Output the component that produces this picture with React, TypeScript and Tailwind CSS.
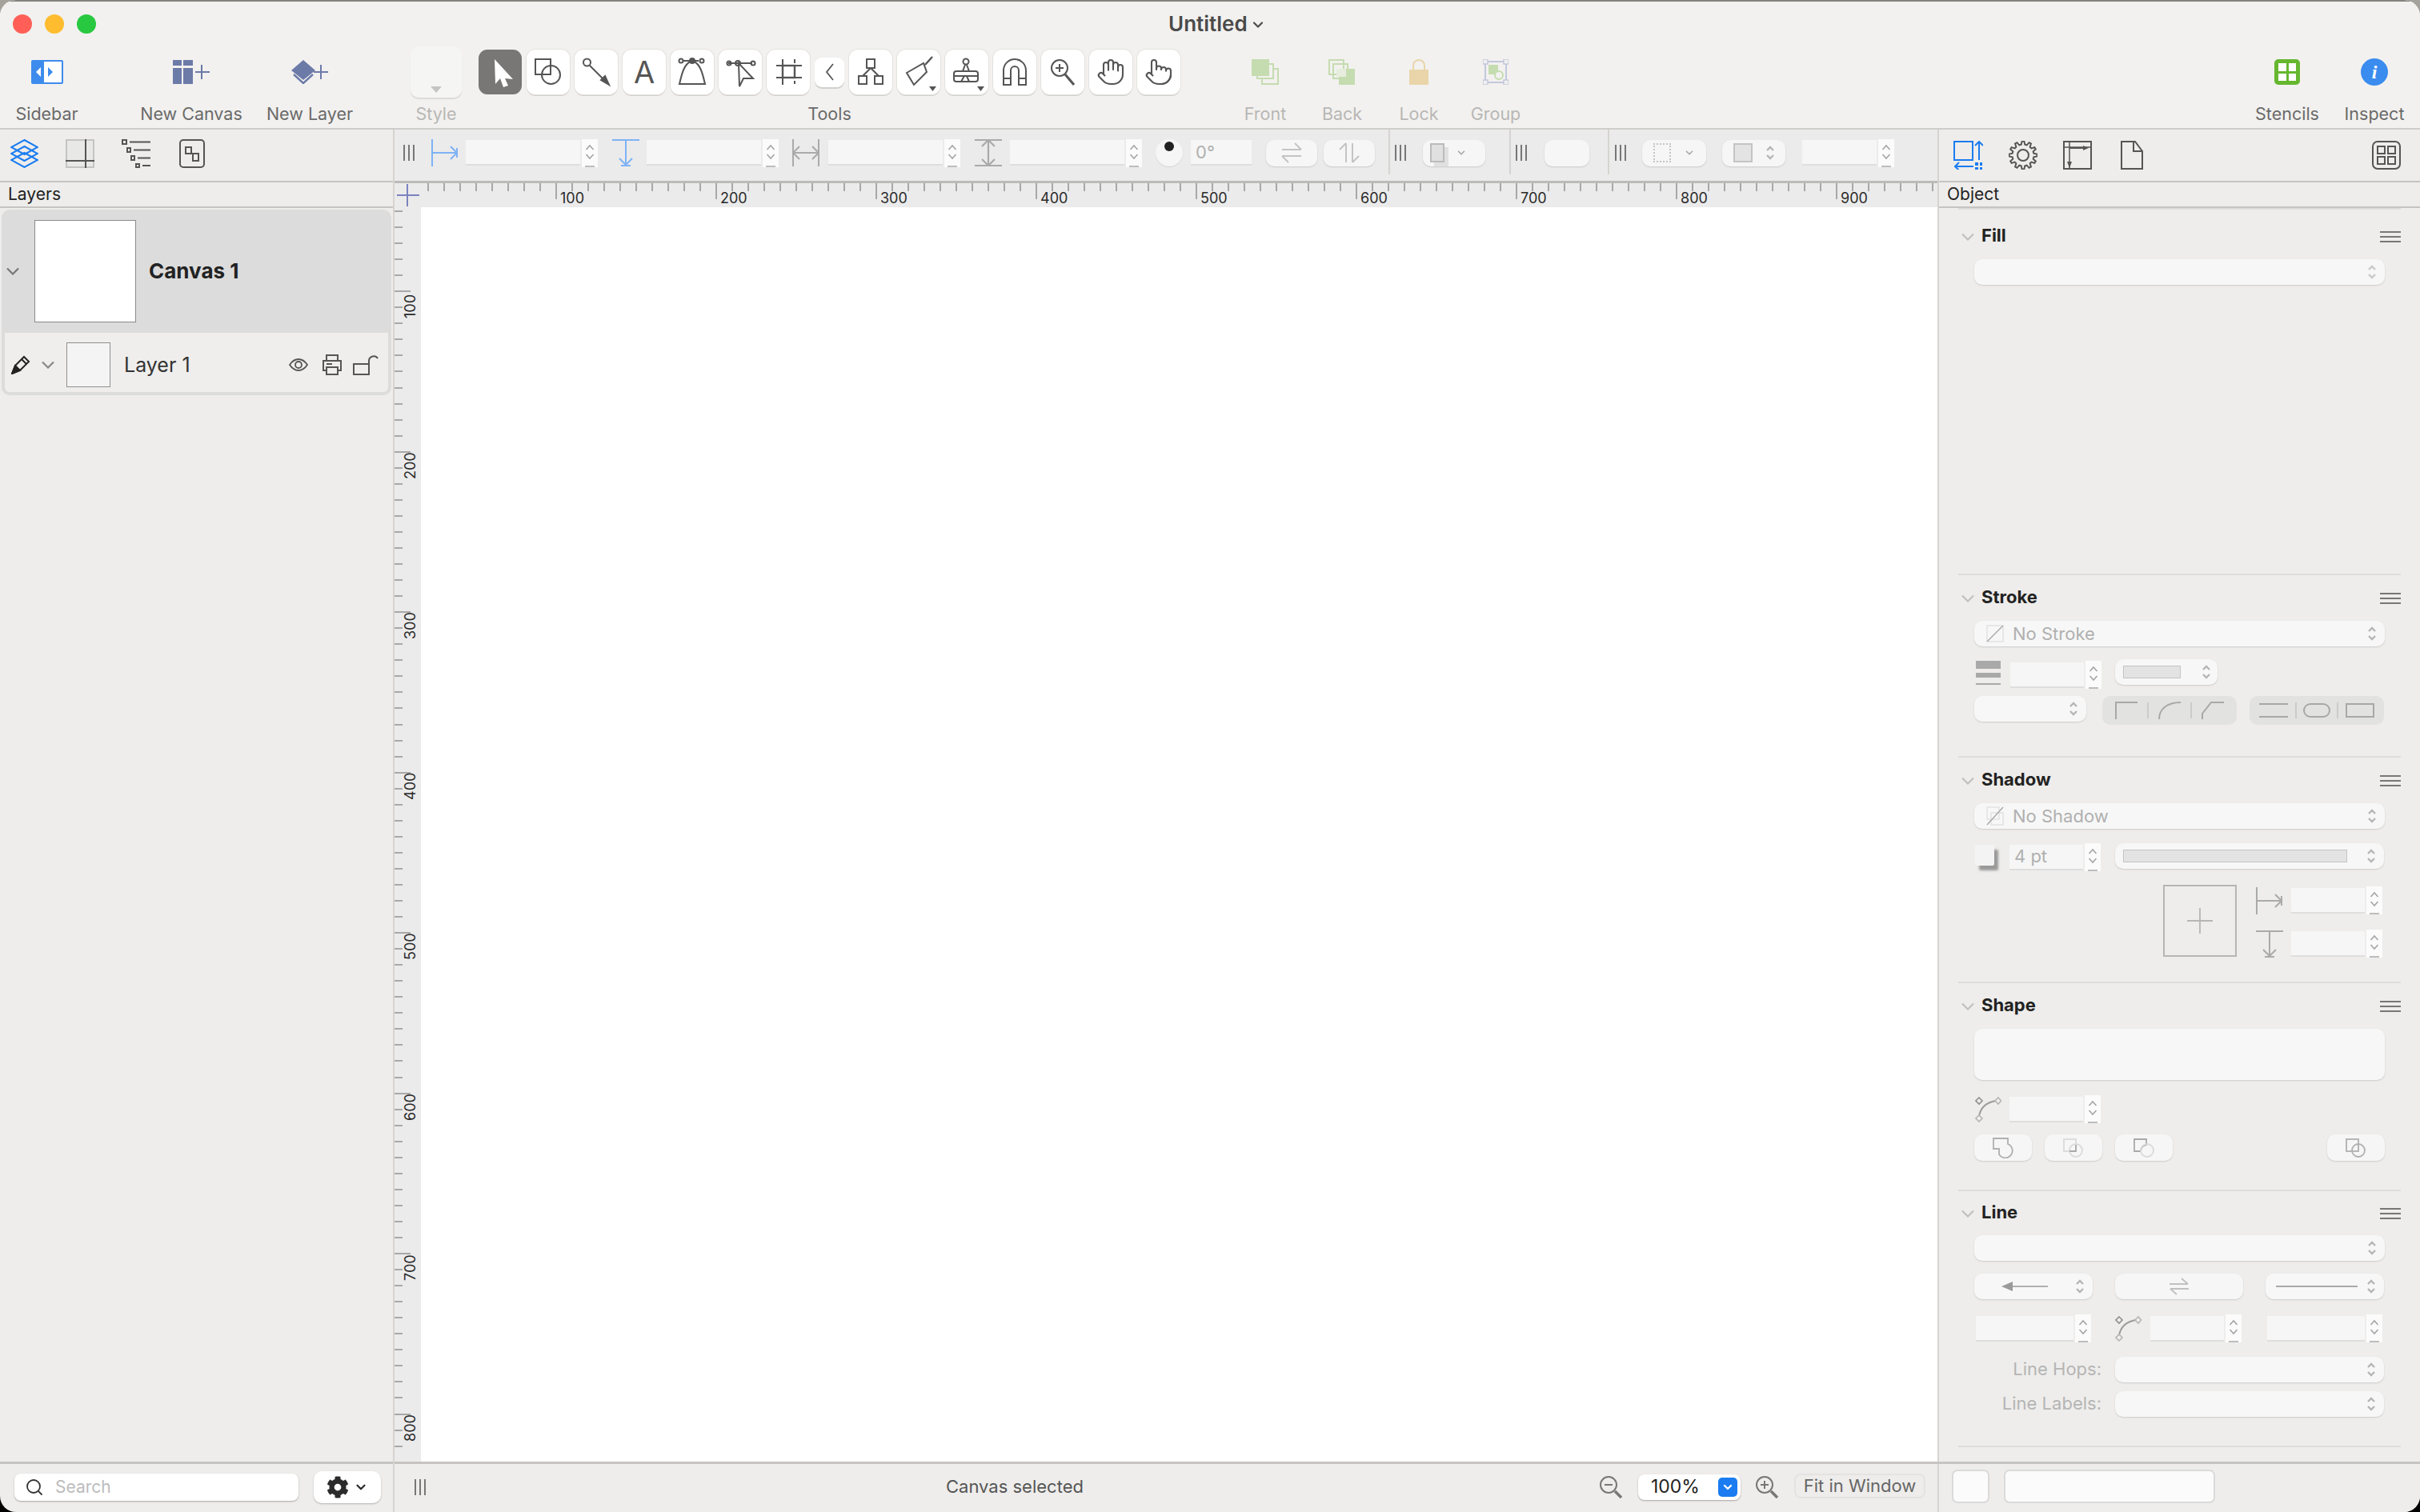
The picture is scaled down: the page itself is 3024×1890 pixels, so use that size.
import { Hand, Pointer, Search, ChevronDown } from 'lucide-react';
import { FaCog } from 'react-icons/fa';
import type { ReactNode } from 'react';

function gearPath(cx: number, cy: number, outer: number, inner: number, n: number) {
  const pts: string[] = [];
  for (let i = 0; i < n; i++) {
    const a = (i / n) * Math.PI * 2;
    const w = (Math.PI / n) * 0.5;
    [[inner, a - w * 1.3], [outer, a - w * 0.6], [outer, a + w * 0.6], [inner, a + w * 1.3]].forEach(([r, t]) => {
      pts.push(`${(cx + r * Math.cos(t)).toFixed(2)} ${(cy + r * Math.sin(t)).toFixed(2)}`);
    });
  }
  return 'M' + pts.join('L') + 'Z';
}

function Grip() {
  return (
    <div className="flex gap-[4px]">
      <div className="w-[2px] h-[20px] bg-[#777]"></div>
      <div className="w-[2px] h-[20px] bg-[#777]"></div>
      <div className="w-[2px] h-[20px] bg-[#777]"></div>
    </div>
  );
}

function UpDown({ className = 'text-[#bdbdbd]' }: { className?: string }) {
  return (
    <svg width="12" height="20" viewBox="0 0 12 20" fill="none" stroke="currentColor" strokeWidth="2.4" className={className}>
      <path d="M2 7l4-4 4 4M2 13l4 4 4-4" />
    </svg>
  );
}

function Stepper() {
  return (
    <div className="ml-[2px] w-[20px] h-[35px] bg-[#fbfbfb] flex flex-col items-center justify-between pt-[6px] shrink-0">
      <svg width="12" height="20" viewBox="0 0 12 20" fill="none" stroke="#a5a5a5" strokeWidth="1.6">
        <path d="M1.5 7l4.5-5 4.5 5M1.5 13l4.5 5 4.5-5" />
      </svg>
      <div className="w-[12px] h-[2px] bg-[#bdbdbd]"></div>
    </div>
  );
}

function NumField({ className, text }: { className: string; text?: string }) {
  return (
    <div className="flex items-center shrink-0">
      <div className={`h-[32px] bg-[#f6f6f6] border-b-2 border-[#dedede] flex items-center pl-[6px] text-[22px] text-[#b0b0b0] ${className}`}>{text}</div>
      <Stepper />
    </div>
  );
}

function Select({ className = '', chevron = 'text-[#b5b5b5]', children }: { className?: string; chevron?: string; children?: ReactNode }) {
  return (
    <div className={`h-[32px] rounded-[10px] bg-[#f7f7f7] shadow-[0_1px_2px_rgba(0,0,0,0.14)] flex items-center pr-[10px] ${className}`}>
      <div className="flex-1 flex items-center min-w-0">{children}</div>
      <UpDown className={chevron} />
    </div>
  );
}

function Section({ className, head, title, children }: { className: string; head?: string; title: string; children?: ReactNode }) {
  return (
    <section className={`mx-[24px] border-t-2 border-[#dfdddb] ${className}`}>
      <div className={`flex items-center ${head ?? 'h-[57px]'}`}>
        <svg width="16" height="10" viewBox="0 0 16 10" fill="none" stroke="#c0c0c0" strokeWidth="2.2" className="ml-[4px]">
          <path d="M1 1.5l7 7 7-7" />
        </svg>
        <span className="ml-[9px] pb-[3px] text-[22px] font-bold text-[#222]">{title}</span>
        <div className="ml-auto flex flex-col gap-[4px]">
          <div className="w-[26px] h-[2px] bg-[#777]"></div>
          <div className="w-[26px] h-[2px] bg-[#777]"></div>
          <div className="w-[26px] h-[2px] bg-[#777]"></div>
        </div>
      </div>
      <div className="pl-[20px] pr-[20px]">{children}</div>
    </section>
  );
}

function ToolBtn({ active, children }: { active?: boolean; children: ReactNode }) {
  return (
    <div className={`w-[54px] h-[56px] rounded-[11px] flex items-center justify-center shrink-0 text-[#555] ${active ? 'bg-[#787776]' : 'bg-white shadow-[0_0_0_1px_#e4e2df,0_2px_0_#d2d0cd]'}`}>
      {children}
    </div>
  );
}

function Tool({ children }: { children: ReactNode }) {
  return (
    <svg width="54" height="56" viewBox="0 0 54 56" fill="none" stroke="currentColor" strokeWidth="2">
      {children}
    </svg>
  );
}

function ToolbarItem({ className, label, dim, children }: { className: string; label: string; dim?: boolean; children?: ReactNode }) {
  return (
    <div className={`flex flex-col items-center shrink-0 ${className}`}>
      <div className="h-[64px] flex items-center justify-center">{children}</div>
      <div className={`mt-[5px] h-[30px] leading-[30px] text-[21.5px] whitespace-nowrap ${dim ? 'text-[#b8b7b5]' : 'text-[#6a6a6a]'}`}>{label}</div>
    </div>
  );
}

function FlatBtn({ className, children }: { className: string; children?: ReactNode }) {
  return <div className={`h-[33px] rounded-[10px] bg-[#f6f6f6] shadow-[0_1px_2px_rgba(0,0,0,0.14)] flex items-center justify-center shrink-0 ${className}`}>{children}</div>;
}

function CornerIcon() {
  return (
    <svg width="33" height="32" viewBox="0 0 33 32" fill="none" className="shrink-0">
      <path d="M5 25C6 15 13 7 26 5" stroke="#9b9b9b" strokeWidth="2" />
      <path d="M5 1l4 4-4 4-4-4z" fill="#efefef" stroke="#8f8f8f" strokeWidth="1.6" />
      <path d="M29 1l3.500 4-3.500 4-4-4zM5 23l4 4-4 4-4-4z" fill="#efefef" stroke="#b5b5b5" strokeWidth="1.6" />
    </svg>
  );
}

const hTicks = Array.from({ length: 95 }, (_, i) => i);
const vTicks = Array.from({ length: 79 }, (_, i) => i);

function HRuler() {
  return (
    <div className="h-[33px] bg-[#ebebeb] border-t-[3px] border-[#bdbbb8] flex pl-[8px] overflow-hidden">
      {hTicks.map((i) => {
        const long = i >= 8 && (i - 8) % 10 === 0;
        return (
          <div key={i} className={`w-[20px] shrink-0 border-l-2 border-[#a8a8a8] ${long ? 'h-[20px]' : 'h-[10px]'}`}>
            {long && <div className="pl-[4px] mt-[8px] text-[18px] leading-[22px] text-[#2a2a2a] whitespace-nowrap">{((i - 8) / 10 + 1) * 100}</div>}
          </div>
        );
      })}
    </div>
  );
}

function VRuler() {
  return (
    <div className="flex-1 w-[33px] bg-[#ebebeb] pt-[4px] overflow-hidden">
      {vTicks.map((i) => {
        const long = i >= 5 && (i - 5) % 10 === 0;
        return (
          <div key={i} className="h-[20.06px] flex items-start">
            <div className={`h-[2px] bg-[#a8a8a8] ${long ? 'w-[20px]' : 'w-[10px]'}`}></div>
            {long && <div className="-ml-[10px] mt-[3px] h-[32px] w-[20px] shrink-0 [writing-mode:vertical-rl] rotate-180 text-[18px] leading-[20px] text-[#2a2a2a] whitespace-nowrap">{((i - 5) / 10 + 1) * 100}</div>}
          </div>
        );
      })}
    </div>
  );
}

function OffsetX({ color = '#aaa' }: { color?: string }) {
  return (
    <svg width="34" height="34" viewBox="0 0 34 34" fill="none" stroke={color} strokeWidth="2" className="shrink-0">
      <path d="M1 0v34M1 17h31M24 9l8 8-8 8M32 11v12" />
    </svg>
  );
}

function OffsetY({ color = '#aaa' }: { color?: string }) {
  return (
    <svg width="34" height="34" viewBox="0 0 34 34" fill="none" stroke={color} strokeWidth="2" className="shrink-0">
      <path d="M0 1h34M17 1v31M9 24l8 8 8-8M11 33h12" />
    </svg>
  );
}

export default function App() {
  return (
    <div className="w-[3024px] h-[1890px] bg-[linear-gradient(#a5a29b_50%,#000_50%)] [font-family:Inter,sans-serif]">
      <div className="w-full h-full rounded-[20px] overflow-hidden flex flex-col bg-[#eeedeb]">
        {/* toolbar */}
        <header className="h-[162px] shrink-0 bg-[#f2f1ef] border-t-2 border-b-2 border-t-[#85837e] border-b-[#cfcdca]">
          <div className="h-[56px] flex items-start">
            <div className="flex gap-[16px] pl-[16px] pt-[16px]">
              <div className="w-[24px] h-[24px] rounded-full bg-[#ff5f57]"></div>
              <div className="w-[24px] h-[24px] rounded-full bg-[#febc2e]"></div>
              <div className="w-[24px] h-[24px] rounded-full bg-[#28c840]"></div>
            </div>
            <div className="ml-[1340px] flex items-center h-[54px]">
              <span className="text-[26px] font-semibold text-[#4a4a4a]">Untitled</span>
              <ChevronDown size={20} strokeWidth={2.6} className="ml-[3px] mt-[4px] text-[#4a4a4a]" />
            </div>
          </div>
          <div className="flex">
            <ToolbarItem className="w-[117px]" label="Sidebar">
              <svg width="40" height="30" viewBox="0 0 40 30">
                <rect width="40" height="30" rx="2" fill="#3d8bed" />
                <rect x="16" y="2" width="22" height="26" fill="#fff" />
                <path d="M21 9v12l6-6z" fill="#3d8bed" />
                <path d="M12 9v12l-6-6z" fill="#fff" />
              </svg>
            </ToolbarItem>
            <ToolbarItem className="w-[140px] ml-[52px]" label="New Canvas">
              <svg width="46" height="30" viewBox="0 0 46 30" fill="#6c7aa8">
                <rect x="0" y="0" width="11" height="7" />
                <rect x="13" y="0" width="12" height="7" />
                <rect x="0" y="10" width="11" height="20" />
                <rect x="13" y="10" width="12" height="20" />
                <path d="M36 6v18M28 15h18" stroke="#6c7aa8" strokeWidth="2" />
              </svg>
            </ToolbarItem>
            <ToolbarItem className="w-[110px] ml-[23px]" label="New Layer">
              <svg width="47" height="30" viewBox="0 0 47 30">
                <path d="M15 0l15 13-15 12L0 13z" fill="#6c7aa8" />
                <path d="M3 18l12 11 12-11" fill="none" stroke="#6c7aa8" strokeWidth="2.4" />
                <path d="M37 6v18M28 15h18" stroke="#6c7aa8" strokeWidth="2" />
              </svg>
            </ToolbarItem>
            <ToolbarItem className="w-[64px] ml-[71px]" label="Style" dim>
              <div className="w-[64px] h-[64px] rounded-[10px] bg-[#f5f5f4] shadow-[0_2px_1px_#dcdad8] flex items-end justify-center pb-[6px]">
                <div className="w-0 h-0 border-l-[7px] border-r-[7px] border-t-[8px] border-l-transparent border-r-transparent border-t-[#c4c4c4]"></div>
              </div>
            </ToolbarItem>
            <div className="ml-[20px] w-[879px] flex flex-col items-center shrink-0">
              <div className="h-[64px] flex items-center gap-[6px]">
                <ToolBtn active>
                  <Tool><path d="M20 12L43 37L33 36L37 45L31 47L27 36L21 43Z" fill="#fff" stroke="none" /></Tool>
                </ToolBtn>
                <ToolBtn>
                  <Tool><rect x="11" y="12" width="19" height="19" /><circle cx="30.5" cy="31.5" r="11.5" /></Tool>
                </ToolBtn>
                <ToolBtn>
                  <Tool><circle cx="15.5" cy="16" r="4.5" /><path d="M19 20L38 39" /><path d="M43 44L33 38L38 33Z" fill="currentColor" /></Tool>
                </ToolBtn>
                <ToolBtn>
                  <span className="text-[38px] leading-none text-[#555]">A</span>
                </ToolBtn>
                <ToolBtn>
                  <Tool><path d="M25 15C17 18 14 30 11 43H43C40 30 37 18 29 15" /><path d="M15 14H35" /><circle cx="13" cy="14" r="2.5" /><circle cx="27" cy="14" r="3" fill="currentColor" /><circle cx="39" cy="14" r="2.5" /></Tool>
                </ToolBtn>
                <ToolBtn>
                  <Tool><path d="M25 17L26 46L31 36L43 36Z" /><path d="M12 17H42" /><circle cx="13" cy="17" r="2.5" /><circle cx="24" cy="17" r="3" /><circle cx="43" cy="17" r="2.5" /></Tool>
                </ToolBtn>
                <ToolBtn>
                  <Tool><rect x="20" y="20" width="15" height="15" strokeWidth="2.4" /><path d="M20 12v8M20 35v9M12 20h8M35 20h9M12 35h8M35 35h9M35 12v5M35 39v4" /></Tool>
                </ToolBtn>
                <div className="w-[37px] h-[37px] rounded-[9px] bg-white shadow-[0_2px_0_#d2d0cd] flex items-center justify-center shrink-0">
                  <svg width="12" height="24" viewBox="0 0 12 24" fill="none" stroke="#555" strokeWidth="1.8"><path d="M10 2L2 12l8 10" /></svg>
                </div>
                <ToolBtn>
                  <Tool><rect x="22" y="12" width="10" height="11" /><rect x="12" y="33" width="10" height="10" /><rect x="32" y="33" width="10" height="10" /><path d="M27 23L17 33M27 23L37 33" /></Tool>
                </ToolBtn>
                <ToolBtn>
                  <Tool><path d="M12 29L33 17L37 28L21 44Z" /><path d="M35 19L44 9" strokeWidth="2.4" /><path d="M40 46h9l-4.500 6z" fill="currentColor" stroke="none" /></Tool>
                </ToolBtn>
                <ToolBtn>
                  <Tool><circle cx="26" cy="15" r="3.500" /><path d="M25 19L22 27H30L27 19" /><rect x="11" y="27" width="30" height="13" rx="3" /><path d="M11 33H41M20 40L24 33M30 40L27 33" /><path d="M40 46h9l-4.500 6z" fill="currentColor" stroke="none" /></Tool>
                </ToolBtn>
                <ToolBtn>
                  <Tool><path d="M13 44V26a14 14 0 0 1 28 0V44H32V26a5 5 0 0 0-10 0V44Z" /><path d="M13 36H22M32 36H41" /></Tool>
                </ToolBtn>
                <ToolBtn>
                  <Tool><circle cx="23" cy="23" r="10" /><path d="M23 18v10M18 23h10" /><path d="M30 31L41 44" strokeWidth="3" /></Tool>
                </ToolBtn>
                <ToolBtn><Hand size={36} strokeWidth={1.4} /></ToolBtn>
                <ToolBtn><Pointer size={36} strokeWidth={1.4} /></ToolBtn>
              </div>
              <div className="mt-[5px] h-[30px] leading-[30px] text-[21.5px] text-[#6a6a6a]">Tools</div>
            </div>
            <ToolbarItem className="w-[96px] ml-[57px]" label="Front" dim>
              <svg width="34" height="32" viewBox="0 0 34 32" fill="none" stroke="#c5dcb0" strokeWidth="2"><rect x="1" y="0" width="20" height="20" fill="#c5dcb0" /><path d="M21 6h6v18H7v-4M27 12h6v19H13v-7" /></svg>
            </ToolbarItem>
            <ToolbarItem className="w-[96px]" label="Back" dim>
              <svg width="34" height="32" viewBox="0 0 34 32" fill="none" stroke="#c5dcb0" strokeWidth="2"><rect x="1" y="1" width="18" height="18" /><rect x="6" y="6" width="18" height="18" /><rect x="13" y="12" width="20" height="20" fill="#c5dcb0" stroke="none" /><rect x="10" y="12" width="12" height="10" fill="#e6eddd" stroke="none" /></svg>
            </ToolbarItem>
            <ToolbarItem className="w-[96px]" label="Lock" dim>
              <svg width="24" height="32" viewBox="0 0 24 32" fill="none"><path d="M5 14V8a7 7 0 0 1 14 0v6" stroke="#e9d5a9" strokeWidth="2" /><rect y="13" width="24" height="19" fill="#e9d5a9" /></svg>
            </ToolbarItem>
            <ToolbarItem className="w-[96px]" label="Group" dim>
              <svg width="32" height="32" viewBox="0 0 32 32" fill="none"><rect x="3" y="3" width="26" height="26" stroke="#c3c8dc" strokeWidth="2" /><rect x="0" y="0" width="6" height="6" fill="#f2f1ef" stroke="#c3c8dc" strokeWidth="1.500" /><rect x="26" y="0" width="6" height="6" fill="#f2f1ef" stroke="#c3c8dc" strokeWidth="1.500" /><rect x="0" y="26" width="6" height="6" fill="#f2f1ef" stroke="#c3c8dc" strokeWidth="1.500" /><rect x="26" y="26" width="6" height="6" fill="#f2f1ef" stroke="#c3c8dc" strokeWidth="1.500" /><rect x="7" y="7" width="12" height="12" fill="#c5dcb0" /><circle cx="20" cy="20" r="5" fill="#f2f1ef" stroke="#c5dcb0" strokeWidth="2" /></svg>
            </ToolbarItem>
            <ToolbarItem className="w-[90px] ml-[896px]" label="Stencils">
              <div className="w-[32px] h-[32px] rounded-[5px] bg-[#66b72f] grid grid-cols-2 gap-[3px] p-[5px]">
                <div className="bg-white"></div><div className="bg-white"></div><div className="bg-white"></div><div className="bg-white"></div>
              </div>
            </ToolbarItem>
            <ToolbarItem className="w-[90px] ml-[19px]" label="Inspect">
              <div className="w-[34px] h-[34px] rounded-full bg-[#3a8cee] flex items-center justify-center text-white font-bold italic text-[24px] [font-family:'Liberation_Serif',serif]">i</div>
            </ToolbarItem>
          </div>
        </header>

        <div className="flex-1 flex min-h-0">
          {/* left sidebar */}
          <div className="w-[493px] shrink-0 flex flex-col border-r-2 border-[#d6d4d1]">
            <div className="h-[64px] flex items-center pb-[4px] pl-[13px] shrink-0">
              <svg width="35" height="36" viewBox="0 0 35 36" fill="none" stroke="#1a7cf0" strokeWidth="2">
                <path d="M17.5 1L34 10 17.500 19 1 10zM17.500 9L34 18 17.500 27 1 18zM17.500 17L34 26 17.500 35 1 26z" />
              </svg>
              <svg width="36" height="36" viewBox="0 0 36 36" fill="none" stroke="#555" strokeWidth="2" className="ml-[34px]">
                <rect x="1" y="1" width="34" height="34" stroke="#c4c4c4" strokeWidth="2" fill="#e8e8e6" />
                <path d="M25 0V36M0 27H36" strokeWidth="2" />
              </svg>
              <svg width="36" height="36" viewBox="0 0 36 36" fill="none" stroke="#555" strokeWidth="2" className="ml-[34px]">
                <rect x="1" y="1" width="5" height="5" /><path d="M10 3.500H36" />
                <rect x="7" y="11" width="4" height="5" /><path d="M15 13.500H36" />
                <rect x="12" y="21" width="4" height="5" /><path d="M20 23.500H36" />
                <rect x="18" y="31" width="4" height="4" /><path d="M26 33H36" />
              </svg>
              <svg width="32" height="36" viewBox="0 0 32 36" fill="none" stroke="#555" strokeWidth="2" className="ml-[36px]">
                <rect x="1" y="1" width="30" height="34" rx="4" /><rect x="8" y="10" width="7" height="8" /><rect x="17" y="18" width="7" height="9" />
              </svg>
            </div>
            <div className="h-[34px] shrink-0 border-t-2 border-b-2 border-[#c6c4c1] flex items-center pl-[10px] text-[21px] text-[#222]">Layers</div>
            <div className="mt-[2px] ml-[2px] mr-[2px] rounded-[10px] bg-[#dcdcdc] pb-[4px]">
              <div className="h-[154px] flex items-center">
                <svg width="16" height="10" viewBox="0 0 16 10" fill="none" stroke="#777" strokeWidth="2.200" className="ml-[6px]"><path d="M1 1.500l7 7 7-7" /></svg>
                <div className="ml-[19px] w-[127px] h-[128px] bg-white border border-[#8a8a8a]"></div>
                <span className="ml-[16px] pb-[1px] text-[26px] font-bold text-[#222]">Canvas 1</span>
              </div>
              <div className="mx-[4px] h-[74px] pt-[6px] bg-[#efeeec] rounded-b-[6px] flex items-center text-[#555]">
                <svg width="24" height="24" viewBox="0 0 24 24" fill="none" stroke="#222" strokeWidth="2" className="ml-[8px]"><path d="M1 23l4-10L16 2l6 6L11 19zM13 5l6 6" /><path d="M1 23l4-10 6 6z" fill="#222" /></svg>
                <svg width="16" height="10" viewBox="0 0 16 10" fill="none" stroke="#888" strokeWidth="2.200" className="ml-[14px]"><path d="M1 1.500l7 7 7-7" /></svg>
                <div className="ml-[15px] w-[55px] h-[56px] bg-[#f4f4f4] border border-[#8f8f8f]"></div>
                <span className="ml-[17px] pt-[2px] text-[25px] text-[#333]">Layer 1</span>
                <svg width="24" height="16" viewBox="0 0 24 16" fill="none" stroke="#555" strokeWidth="1.800" className="ml-[123px]"><path d="M1 8C5 2 9 1 12 1s7 1 11 7c-4 6-8 7-11 7S5 14 1 8z" /><circle cx="12" cy="8" r="4" /></svg>
                <svg width="24" height="26" viewBox="0 0 24 26" fill="none" stroke="#555" strokeWidth="2" className="ml-[18px]"><path d="M5 8V1h14v7M5 20H1V8h22v12h-4" /><rect x="5" y="16" width="14" height="9" /><path d="M5 12h7" /></svg>
                <svg width="32" height="26" viewBox="0 0 32 26" fill="none" stroke="#555" strokeWidth="2" className="ml-[14px]"><rect x="1" y="12" width="19" height="13" /><path d="M20 12V8a6 6 0 0 1 11-3" /></svg>
              </div>
            </div>
            <div className="mt-auto h-[63px] shrink-0 border-t-[3px] border-[#c6c4c1] flex items-center pl-[18px] pb-[3px]">
              <div className="w-[355px] h-[34px] rounded-[8px] bg-white shadow-[0_1px_2px_rgba(0,0,0,0.3)] flex items-center pl-[13px]">
                <Search size={24} strokeWidth={1.800} className="text-[#333] shrink-0" />
                <span className="ml-[14px] text-[21px] text-[#bcbcbc]">Search</span>
              </div>
              <div className="ml-[19px] w-[84px] h-[40px] rounded-[10px] bg-white shadow-[0_1px_2px_rgba(0,0,0,0.25)] flex items-center justify-center gap-[6px]">
                <FaCog size={28} className="text-[#2b2b2b]" />
                <ChevronDown size={18} strokeWidth={3} className="text-[#2b2b2b]" />
              </div>
            </div>
          </div>

          {/* canvas */}
          <div className="w-[1928px] shrink-0 flex flex-col min-w-0">
            <div className="h-[64px] shrink-0 bg-[#ebebeb] flex items-center pb-[6px]">
              <div className="ml-[11px]"><Grip /></div>
              <div className="ml-[21px]"><OffsetX color="#7fb2f5" /></div>
              <div className="ml-[9px]"><NumField className="w-[143px]" /></div>
              <div className="ml-[18px]"><OffsetY color="#7fb2f5" /></div>
              <div className="ml-[9px]"><NumField className="w-[143px]" /></div>
              <svg width="34" height="34" viewBox="0 0 34 34" fill="none" stroke="#aaa" strokeWidth="2" className="ml-[17px] shrink-0"><path d="M1 0v34M33 0v34M1 17h32M9 9l-8 8 8 8M25 9l8 8-8 8" /></svg>
              <div className="ml-[11px]"><NumField className="w-[143px]" /></div>
              <svg width="34" height="34" viewBox="0 0 34 34" fill="none" stroke="#aaa" strokeWidth="2" className="ml-[18px] shrink-0"><path d="M0 1h34M0 33h34M17 1v32M9 9l8-8 8 8M9 25l8 8 8-8" strokeWidth="2.200" /></svg>
              <div className="ml-[10px]"><NumField className="w-[143px]" /></div>
              <div className="ml-[17px] w-[34px] h-[34px] rounded-full bg-[#f6f6f6] shadow-[0_1px_1px_rgba(0,0,0,0.1)] flex justify-center pt-[3px] shrink-0"><div className="w-[12px] h-[12px] rounded-full bg-[#222]"></div></div>
              <div className="ml-[10px] w-[76px] h-[32px] bg-[#f6f6f6] border-b-2 border-[#dedede] flex items-center pl-[6px] text-[22px] text-[#b0b0b0] shrink-0">0°</div>
              <FlatBtn className="ml-[18px] w-[64px]">
                <svg width="28" height="28" viewBox="0 0 28 28" fill="none" stroke="#c4c4c4" strokeWidth="2"><path d="M2 10H26M18 2l8 8M26 18H2M10 26l-8-8" /></svg>
              </FlatBtn>
              <FlatBtn className="ml-[8px] w-[64px]">
                <svg width="28" height="28" viewBox="0 0 28 28" fill="none" stroke="#c4c4c4" strokeWidth="2"><path d="M10 26V2M2 10l8-8M18 2v24M26 18l-8 8" /></svg>
              </FlatBtn>
              <div className="ml-[17px] -mt-[2px] w-[2px] h-[56px] bg-[#d6d4d1]"></div>
              <div className="ml-[6px]"><Grip /></div>
              <FlatBtn className="ml-[21px] w-[78px]">
                <div className="w-[18px] h-[24px] bg-[#e0e0e0] border-2 border-[#bbb] -ml-[14px] shadow-[5px_5px_0_#e0e0e0]"></div>
                <ChevronDown size={14} strokeWidth={3} className="ml-[14px] text-[#aaa]" />
              </FlatBtn>
              <div className="ml-[30px] -mt-[2px] w-[2px] h-[56px] bg-[#d6d4d1]"></div>
              <div className="ml-[6px]"><Grip /></div>
              <FlatBtn className="ml-[22px] w-[56px]" />
              <div className="ml-[23px] -mt-[2px] w-[2px] h-[56px] bg-[#d6d4d1]"></div>
              <div className="ml-[7px]"><Grip /></div>
              <FlatBtn className="ml-[20px] w-[80px]">
                <div className="w-[22px] h-[24px] border-2 border-dotted border-[#c4c4c4]"></div>
                <ChevronDown size={14} strokeWidth={3} className="ml-[16px] text-[#aaa]" />
              </FlatBtn>
              <FlatBtn className="ml-[20px] w-[79px]">
                <div className="w-[24px] h-[24px] bg-[#e3e3e3] border-2 border-[#c4c4c4]"></div>
                <UpDown className="ml-[16px] text-[#b5b5b5]" />
              </FlatBtn>
              <div className="ml-[21px]"><NumField className="w-[93px]" /></div>
            </div>
            <div className="flex-1 flex min-h-0">
              <div className="w-[33px] shrink-0 flex flex-col">
                <div className="h-[33px] bg-[#ebebeb] border-t-[3px] border-[#bdbbb8] shrink-0">
                  <svg width="33" height="30" viewBox="0 0 33 30" fill="none" stroke="#7c82bf" strokeWidth="2"><path d="M16 1V29M3 15H31" /></svg>
                </div>
                <VRuler />
              </div>
              <div className="flex-1 flex flex-col min-w-0">
                <HRuler />
                <div className="flex-1 bg-white"></div>
              </div>
            </div>
            <div className="h-[63px] shrink-0 border-t-[3px] border-[#c6c4c1] flex items-center pb-[3px] text-[#555]">
              <div className="ml-[25px]"><Grip /></div>
              <span className="ml-[650px] text-[22px] w-[172px] whitespace-nowrap text-[#555]">Canvas selected</span>
              <svg width="29" height="28" viewBox="0 0 29 28" fill="none" stroke="#777" strokeWidth="2" className="ml-[645px]"><circle cx="11" cy="11" r="10" /><path d="M6 11h10" /><path d="M19 19l8 8" strokeWidth="3.500" /></svg>
              <div className="ml-[19px] w-[128px] h-[32px] rounded-[8px] bg-white shadow-[0_1px_2px_rgba(0,0,0,0.3)] flex items-center pl-[16px] pr-[4px] shrink-0">
                <span className="text-[23px] text-[#222]">100%</span>
                <div className="ml-auto w-[24px] h-[24px] rounded-[5px] bg-[#1a7cf0] flex items-center justify-center"><ChevronDown size={16} strokeWidth={3.500} className="text-white" /></div>
              </div>
              <svg width="29" height="28" viewBox="0 0 29 28" fill="none" stroke="#777" strokeWidth="2" className="ml-[19px]"><circle cx="11" cy="11" r="10" /><path d="M6 11h10M11 6v10" /><path d="M19 19l8 8" strokeWidth="3.500" /></svg>
              <div className="ml-[19px] w-[164px] h-[31px] -mt-[2px] rounded-[8px] border-2 border-[#e4e3e1] flex items-center justify-center text-[22px] text-[#666] whitespace-nowrap shrink-0">Fit in Window</div>
            </div>
          </div>

          {/* inspector */}
          <div className="flex-1 flex flex-col border-l-2 border-[#d6d4d1] min-w-0 bg-[#eeedeb]">
            <div className="h-[64px] shrink-0 flex items-center pl-[18px]">
              <svg width="37" height="36" viewBox="0 0 37 36" fill="none" stroke="#1a7cf0" strokeWidth="2"><rect x="1" y="1" width="23" height="23" /><path d="M32 24V1M27 6l5-5 5 5M25 32H2M7 27l-5 5 5 5" /><path d="M27 27h4v4h-4zM33 27h3v4h-3zM27 33h4v3h-4zM33 33h3v3h-3z" fill="#1a7cf0" stroke="none" /></svg>
              <svg width="36" height="36" viewBox="0 0 36 36" fill="none" stroke="#555" strokeWidth="2" className="ml-[32px]"><path d={gearPath(18, 18, 17.500, 13.500, 12)} /><circle cx="18" cy="18" r="7" /></svg>
              <svg width="36" height="36" viewBox="0 0 36 36" fill="none" stroke="#555" strokeWidth="2" className="ml-[32px]"><rect x="1" y="1" width="34" height="34" /><path d="M1 8H35M8 1V35" strokeWidth="1.500" /><path d="M8 9H26" /><path d="M32 9l-7-3v6zM8 34l-3-8h6z" fill="#555" stroke="none" /></svg>
              <svg width="28" height="36" viewBox="0 0 28 36" fill="none" stroke="#555" strokeWidth="2" className="ml-[36px]"><path d="M1 1H18L27 13V35H1ZM16 2V13H26" /></svg>
              <svg width="36" height="36" viewBox="0 0 36 36" fill="none" stroke="#555" strokeWidth="2" className="ml-auto mr-[24px]"><rect x="1" y="1" width="34" height="34" rx="6" /><rect x="7" y="7" width="9" height="9" /><rect x="20" y="7" width="9" height="9" /><rect x="7" y="20" width="9" height="9" /><rect x="20" y="20" width="9" height="9" /></svg>
            </div>
            <div className="h-[34px] shrink-0 border-t-2 border-b-2 border-[#c6c4c1] flex items-center pl-[10px] text-[21px] text-[#222]">Object</div>

            <Section className="h-[457px] border-t-0 pt-[5px]" title="Fill">
              <Select chevron="text-[#c8c8c8]" />
            </Section>
            <Section className="h-[228px]" title="Stroke">
              <Select>
                <svg width="22" height="22" viewBox="0 0 22 22" fill="none" className="ml-[15px]"><rect x="1" y="1" width="20" height="20" stroke="#e2e2e2" strokeWidth="1.500" /><path d="M1 21L21 1" stroke="#aaa" strokeWidth="1.500" /></svg>
                <span className="ml-[11px] text-[22px] text-[#b0b0b0]">No Stroke</span>
              </Select>
              <div className="mt-[16px] flex items-start h-[37px]">
                <svg width="33" height="32" viewBox="0 0 33 32" className="mt-[2px] ml-[1px] shrink-0" fill="#a9a9a9"><rect x="1" y="0" width="31" height="10" /><rect x="1" y="15" width="31" height="6" /><rect x="1" y="28" width="31" height="2" /></svg>
                <div className="ml-[11px] mt-[2px]"><NumField className="w-[92px]" /></div>
                <Select className="ml-[17px] w-[128px] !pr-[8px]">
                  <div className="ml-[10px] w-[72px] h-[16px] bg-[#e3e3e3] border border-[#c4c4c4]"></div>
                </Select>
              </div>
              <div className="mt-[9px] flex items-start">
                <Select className="w-[140px]" />
                <div className="ml-[20px] w-[168px] h-[36px] rounded-[10px] bg-[#e2e2e0] flex items-center justify-around px-[10px]">
                  <svg width="28" height="22" viewBox="0 0 28 22" fill="none" stroke="#a8a8a8" strokeWidth="2"><path d="M1 22V1H28" /></svg>
                  <div className="w-[2px] h-[20px] bg-[#cbcbc9]"></div>
                  <svg width="28" height="22" viewBox="0 0 28 22" fill="none" stroke="#a8a8a8" strokeWidth="2"><path d="M1 22C1 10 10 1 28 1" /></svg>
                  <div className="w-[2px] h-[20px] bg-[#cbcbc9]"></div>
                  <svg width="28" height="22" viewBox="0 0 28 22" fill="none" stroke="#a8a8a8" strokeWidth="2"><path d="M1 22V15L12 1H28" /></svg>
                </div>
                <div className="ml-[16px] w-[168px] h-[36px] rounded-[10px] bg-[#e2e2e0] flex items-center justify-around px-[8px]">
                  <svg width="36" height="20" viewBox="0 0 36 20" fill="none" stroke="#a8a8a8" strokeWidth="2"><path d="M0 2H36M0 18H36" /></svg>
                  <div className="w-[2px] h-[20px] bg-[#cbcbc9]"></div>
                  <svg width="34" height="18" viewBox="0 0 34 18" fill="none" stroke="#a8a8a8" strokeWidth="2"><rect x="1" y="1" width="32" height="16" rx="8" /></svg>
                  <div className="w-[2px] h-[20px] bg-[#cbcbc9]"></div>
                  <svg width="36" height="18" viewBox="0 0 36 18" fill="none" stroke="#a8a8a8" strokeWidth="2"><rect x="1" y="1" width="34" height="16" /></svg>
                </div>
              </div>
            </Section>
            <Section className="h-[282px]" title="Shadow">
              <Select>
                <svg width="22" height="24" viewBox="0 0 22 24" fill="none" className="ml-[15px]"><rect x="1" y="1" width="15" height="15" stroke="#e2e2e2" strokeWidth="1.500" /><rect x="6" y="8" width="15" height="15" stroke="#e2e2e2" strokeWidth="1.500" /><path d="M1 23L21 1" stroke="#aaa" strokeWidth="1.500" /></svg>
                <span className="ml-[11px] text-[22px] text-[#b0b0b0]">No Shadow</span>
              </Select>
              <div className="mt-[18px] flex items-start">
                <div className="mt-[2px] ml-[1px] w-[24px] h-[26px] rounded-[2px] bg-[#f3f3f3] shadow-[5px_6px_3px_#999] shrink-0"></div>
                <div className="ml-[19px]"><NumField className="w-[92px]" text="4 pt" /></div>
                <Select className="ml-[18px] w-[336px]">
                  <div className="ml-[10px] w-[280px] h-[16px] bg-[#e3e3e3] border border-[#c4c4c4]"></div>
                </Select>
              </div>
              <div className="mt-[17px] flex items-start">
                <div className="ml-[236px] w-[92px] h-[90px] border-2 border-[#b5b5b5] flex items-center justify-center shrink-0">
                  <svg width="32" height="32" viewBox="0 0 32 32" fill="none" stroke="#b5b5b5" strokeWidth="1.800"><path d="M16 0V32M0 16H32" /></svg>
                </div>
                <div className="ml-[24px] mt-[2px] flex flex-col gap-[19px]">
                  <div className="flex items-center"><OffsetX /><div className="ml-[10px]"><NumField className="w-[92px]" /></div></div>
                  <div className="flex items-center"><OffsetY /><div className="ml-[10px]"><NumField className="w-[92px]" /></div></div>
                </div>
              </div>
            </Section>
            <Section className="h-[260px]" title="Shape">
              <div className="h-[64px] rounded-[10px] bg-[#f7f7f7] shadow-[0_1px_2px_rgba(0,0,0,0.14)]"></div>
              <div className="mt-[19px] flex items-center">
                <div className="ml-[1px]"><CornerIcon /></div>
                <div className="ml-[10px]"><NumField className="w-[92px]" /></div>
              </div>
              <div className="mt-[14px] flex">
                <FlatBtn className="w-[72px]">
                  <svg width="26" height="26" viewBox="0 0 26 26" fill="none" stroke="#b0b0b0" strokeWidth="1.800"><path d="M1 1H19V8A9 9 0 1 1 8 21V14H1Z" /></svg>
                </FlatBtn>
                <FlatBtn className="ml-[16px] w-[72px]">
                  <svg width="26" height="24" viewBox="0 0 26 24" fill="none" strokeWidth="1.800"><rect x="1" y="1" width="15" height="15" stroke="#dadada" /><circle cx="16" cy="15" r="8" stroke="#dadada" /><path d="M8 16H16V8" stroke="#aaa" /></svg>
                </FlatBtn>
                <FlatBtn className="ml-[16px] w-[72px]">
                  <svg width="26" height="24" viewBox="0 0 26 24" fill="none" strokeWidth="1.800"><path d="M1 16V1H16V8A8 8 0 0 0 9 16Z" stroke="#aaa" /><circle cx="17" cy="15" r="8" stroke="#dadada" /></svg>
                </FlatBtn>
                <FlatBtn className="ml-auto w-[72px]">
                  <svg width="26" height="24" viewBox="0 0 26 24" fill="none" stroke="#b0b0b0" strokeWidth="1.800"><rect x="1" y="1" width="15" height="15" /><circle cx="16" cy="15" r="8" /></svg>
                </FlatBtn>
              </div>
            </Section>
            <Section className="h-[320px]" head="h-[55px]" title="Line">
              <Select />
              <div className="mt-[16px] flex">
                <Select className="w-[148px] pl-[34px]">
                  <svg width="58" height="12" viewBox="0 0 58 12"><path d="M0 6L14 0V12Z" fill="#9a9a9a" /><path d="M14 6H58" stroke="#9a9a9a" strokeWidth="1.500" /></svg>
                </Select>
                <FlatBtn className="ml-[28px] w-[160px] !h-[32px]">
                  <svg width="24" height="22" viewBox="0 0 24 22" fill="none" stroke="#c0c0c0" strokeWidth="1.800"><path d="M0 8H23M15 1l8 7M24 14H1M9 21l-8-7" /></svg>
                </FlatBtn>
                <Select className="ml-[28px] w-[148px] pl-[13px]">
                  <div className="w-[102px] h-[2px] bg-[#a8a8a8]"></div>
                </Select>
              </div>
              <div className="mt-[19px] flex items-center">
                <div className="ml-[2px]"><NumField className="w-[122px]" /></div>
                <div className="ml-[30px]"><CornerIcon /></div>
                <div className="ml-[11px]"><NumField className="w-[92px]" /></div>
                <div className="ml-[32px]"><NumField className="w-[122px]" /></div>
              </div>
              <div className="mt-[17px] flex items-center">
                <span className="w-[159px] text-right text-[22px] text-[#b5b5b5] whitespace-nowrap">Line Hops:</span>
                <Select className="ml-[17px] w-[336px]" />
              </div>
              <div className="mt-[10px] flex items-center">
                <span className="w-[159px] text-right text-[22px] text-[#b5b5b5] whitespace-nowrap">Line Labels:</span>
                <Select className="ml-[17px] w-[336px]" />
              </div>
            </Section>
            <div className="mx-[24px] border-t-2 border-[#dfdddb] flex-1"></div>
            <div className="h-[63px] shrink-0 -ml-[2px] border-t-[3px] border-[#c6c4c1] flex items-start pt-[7px] pl-[18px]">
              <div className="w-[47px] h-[42px] rounded-[7px] bg-[#fbfbfb] border-2 border-[#dadada]"></div>
              <div className="ml-[18px] w-[264px] h-[42px] rounded-[7px] bg-[#fbfbfb] border-2 border-[#dadada]"></div>
            </div>
          </div>
        </div>
      </div>
    </div>
  );
}
